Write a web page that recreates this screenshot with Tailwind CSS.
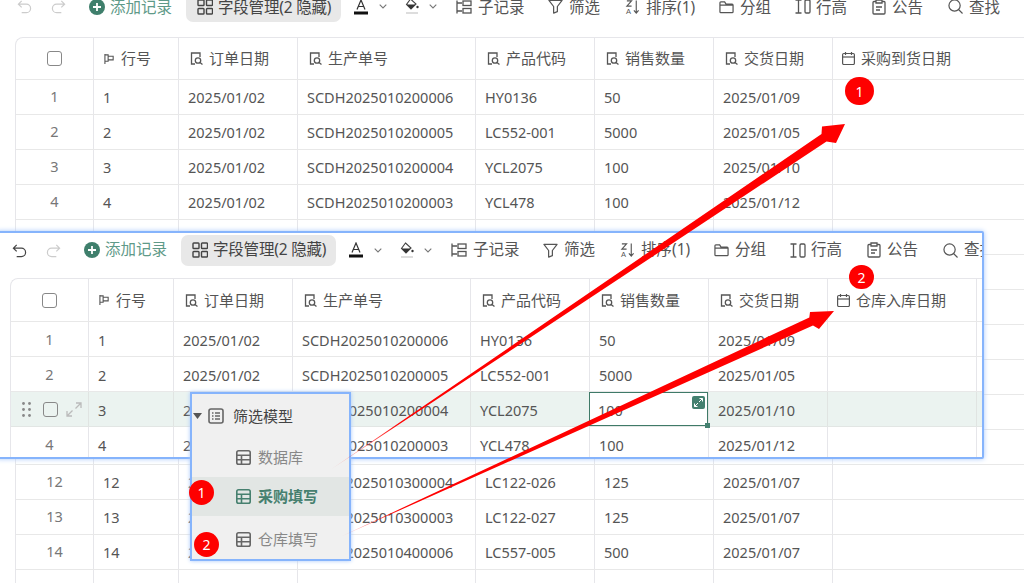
<!DOCTYPE html>
<html lang="zh">
<head>
<meta charset="utf-8">
<script src="https://cdn.jsdelivr.net/npm/@tailwindcss/browser@4"></script>
</head>
<body class="m-0 bg-white">
<svg class="hidden" width="0" height="0">
  <symbol id="undo" viewBox="0 0 16 16"><path d="M5 2 1.500 5.500 5 9M1.500 5.500H10a4.500 4.500 0 0 1 0 9H5" fill="none" stroke="currentColor" stroke-width="1.300"/></symbol>
  <symbol id="redo" viewBox="0 0 16 16"><path d="M11 2l3.500 3.500L11 9M14.500 5.500H6a4.500 4.500 0 0 0 0 9h5" fill="none" stroke="currentColor" stroke-width="1.300"/></symbol>
  <symbol id="plus" viewBox="0 0 16 16"><circle cx="8" cy="8" r="8" fill="#3f7f6c"/><path d="M8 4v8M4 8h8" stroke="#fff" stroke-width="1.800"/></symbol>
  <symbol id="grid4" viewBox="0 0 16 16"><g fill="none" stroke="currentColor" stroke-width="1.400"><rect x="1" y="1" width="6" height="5.500" rx=".8"/><rect x="9.500" y="1" width="6" height="5.500" rx=".8"/><rect x="1" y="9.500" width="6" height="5.500" rx=".8"/><rect x="9.500" y="9.500" width="6" height="5.500" rx=".8"/></g></symbol>
  <symbol id="fontc" viewBox="0 0 14 16"><path d="M3 10.500 7 1l4 9.500M4.500 7.500h5" fill="none" stroke="#333" stroke-width="1.200"/><rect x="0" y="12.500" width="14" height="3" fill="#111"/></symbol>
  <symbol id="chev" viewBox="0 0 8 5"><path d="M.7.7 4 4 7.300.7" fill="none" stroke="#777" stroke-width="1.100"/></symbol>
  <symbol id="bucket" viewBox="0 0 14 17"><path d="M5.500 1 11 6 6 11 1.500 6.500Z" fill="#fff" stroke="#444" stroke-width="1.100"/><path d="M1.500 6.500h9L6 11Z" fill="#333"/><circle cx="12.500" cy="9" r="1.200" fill="#333"/><rect x="1" y="14" width="12" height="2" fill="#ddd"/></symbol>
  <symbol id="sub" viewBox="0 0 16 14"><g fill="none" stroke="currentColor" stroke-width="1.300"><path d="M1 .5v13M1 3h5M1 11h5"/><rect x="7" y="1" width="8" height="4.500"/><rect x="7" y="8.500" width="8" height="4.500"/></g></symbol>
  <symbol id="filter" viewBox="0 0 16 16"><path d="M1 1.500h14L10 8v5.500l-4 1.500V8Z" fill="none" stroke="currentColor" stroke-width="1.300" stroke-linejoin="round"/></symbol>
  <symbol id="sort" viewBox="0 0 16 16"><path d="M12 1v13M9.500 11.500 12 14.500l2.500-3M2 1.500h5L2 7h5" fill="none" stroke="currentColor" stroke-width="1.200"/><text x="1" y="15.500" font-size="8" font-family="Liberation Sans" fill="currentColor">A</text></symbol>
  <symbol id="folder" viewBox="0 0 16 14"><path d="M1 12V2.500q0-1 1-1h4l1.500 2.500H14q1 0 1 1V12q0 1-1 1H2q-1 0-1-1ZM1 5h14" fill="none" stroke="currentColor" stroke-width="1.300"/></symbol>
  <symbol id="height" viewBox="0 0 16 15"><path d="M.5 1h6M.5 14h6M3.500 1v13" fill="none" stroke="currentColor" stroke-width="1.300"/><rect x="10" y="1" width="5" height="13" rx="1.200" fill="none" stroke="currentColor" stroke-width="1.300"/></symbol>
  <symbol id="notice" viewBox="0 0 14 16"><path d="M4 2.500H2q-1 0-1 1V14q0 1 1 1h10q1 0 1-1V3.500q0-1-1-1h-2M4 1h6v3H4ZM4 8h6M4 11h4" fill="none" stroke="currentColor" stroke-width="1.300"/></symbol>
  <symbol id="search" viewBox="0 0 16 16"><circle cx="7" cy="7" r="6" fill="none" stroke="currentColor" stroke-width="1.300"/><path d="m11.500 11.500 4 4" stroke="currentColor" stroke-width="1.300"/></symbol>
  <symbol id="flag" viewBox="0 0 12 12"><path d="M1 .5v11M1 1.500h3.500v7H1M4.500 3H10v4H4.500" fill="none" stroke="currentColor" stroke-width="1.200"/></symbol>
  <symbol id="doc" viewBox="0 0 13 13"><path d="M5 12H1.500V1H10v4" fill="none" stroke="currentColor" stroke-width="1.300"/><circle cx="8" cy="8.500" r="2.700" fill="none" stroke="currentColor" stroke-width="1.300"/><path d="m10 10.500 2.500 2" stroke="currentColor" stroke-width="1.300"/></symbol>
  <symbol id="cal" viewBox="0 0 13 13"><path d="M3.500 0v3M9.500 0v3" stroke="currentColor" stroke-width="1.200"/><rect x=".6" y="1.500" width="11.800" height="11" rx="1.200" fill="none" stroke="currentColor" stroke-width="1.200"/><path d="M.6 5h11.800" stroke="currentColor" stroke-width="1.200"/></symbol>
  <symbol id="tbl" viewBox="0 0 15 15"><rect x=".8" y=".8" width="13.400" height="13.400" rx="1.800" fill="none" stroke="currentColor" stroke-width="1.600"/><path d="M.8 5.300h13.400M.8 9.700h13.400M5.500 5.300v8.900" stroke="currentColor" stroke-width="1.600"/></symbol>
  <symbol id="list" viewBox="0 0 16 16"><rect x="1" y="1" width="14" height="14" rx="2" fill="none" stroke="currentColor" stroke-width="1.600"/><path d="M4 5h1.500M4 8h1.500M4 11h1.500M7 5h5M7 8h5M7 11h5" stroke="currentColor" stroke-width="1.300"/></symbol>
</svg>

<div class="relative w-[1024px] h-[583px] overflow-hidden bg-white font-['Noto_Sans','Noto_Sans_CJK_SC',sans-serif] text-[14.5px] text-[#555]">

  <!-- background window -->
  <div class="pl-[5px] -mt-[9px]">
    <div class="flex items-center h-[31px] text-[15.5px] whitespace-nowrap text-[#555] [&>*]:shrink-0 [&>span]:pt-[2px]">
      <svg class="ml-[12px] w-[15px] h-[15px] text-[#ccc]"><use href="#undo"/></svg>
      <svg class="ml-[19px] w-[15px] h-[15px] text-[#ccc]"><use href="#redo"/></svg>
      <svg class="ml-[23px] w-4 h-4"><use href="#plus"/></svg>
      <span class="ml-[5px] w-[62px] text-[#5f9a89]">添加记录</span>
      <div class="ml-[14px] w-[155px] h-[31px] rounded-[7px] bg-[#e8e8e8] flex items-center pl-[11px] gap-[5px] text-[#444]"><svg class="w-4 h-4 shrink-0"><use href="#grid4"/></svg><span class="tracking-[-0.2px] pt-[2px]">字段管理(2 隐藏)</span></div>
      <svg class="ml-[13px] w-[14px] h-4"><use href="#fontc"/></svg>
      <svg class="ml-[11px] w-2 h-[5px]"><use href="#chev"/></svg>
      <svg class="ml-[18px] w-[14px] h-[17px]"><use href="#bucket"/></svg>
      <svg class="ml-[10px] w-2 h-[5px]"><use href="#chev"/></svg>
      <svg class="ml-[19px] w-4 h-[14px]"><use href="#sub"/></svg>
      <span class="ml-[6px] w-[46px]">子记录</span>
      <svg class="ml-[24px] w-[15px] h-[15px]"><use href="#filter"/></svg>
      <span class="ml-[6px] w-[31px]">筛选</span>
      <svg class="ml-[25px] w-[15px] h-4"><use href="#sort"/></svg>
      <span class="ml-[6px] w-[48px]">排序(1)</span>
      <svg class="ml-[25px] w-[15px] h-[14px]"><use href="#folder"/></svg>
      <span class="ml-[6px] w-[30px]">分组</span>
      <svg class="ml-[25px] w-4 h-[15px]"><use href="#height"/></svg>
      <span class="ml-[5px] w-[30px]">行高</span>
      <svg class="ml-[26px] w-[14px] h-4"><use href="#notice"/></svg>
      <span class="ml-[6px] w-[30px]">公告</span>
      <svg class="ml-[26px] w-[15px] h-[15px]"><use href="#search"/></svg>
      <span class="ml-[6px]">查找</span>
    </div>
  </div>

  <div class="ml-[15px] mt-[15px] w-[1100px] rounded-tl-[8px] border-t border-l border-[#e6e6ea]">
    <div class="grid grid-cols-[77px_85px_119px_178px_119px_119px_119px_1fr] h-[42px] border-b border-[#e8e8e8]">
      <div class="flex items-center justify-center"><span class="block w-[15px] h-[15px] border border-[#888] rounded-[3px]"></span></div>
      <div class="flex items-center gap-[6px] pl-[10px] border-l border-[#e6e6ea] text-[15px]"><svg class="w-[11px] h-[12px]"><use href="#flag"/></svg>行号</div>
      <div class="flex items-center gap-[6px] pl-[11px] border-l border-[#e6e6ea] text-[15px]"><svg class="w-[13px] h-[13px]"><use href="#doc"/></svg>订单日期</div>
      <div class="flex items-center gap-[6px] pl-[11px] border-l border-[#e6e6ea] text-[15px]"><svg class="w-[13px] h-[13px]"><use href="#doc"/></svg>生产单号</div>
      <div class="flex items-center gap-[6px] pl-[11px] border-l border-[#e6e6ea] text-[15px]"><svg class="w-[13px] h-[13px]"><use href="#doc"/></svg>产品代码</div>
      <div class="flex items-center gap-[6px] pl-[11px] border-l border-[#e6e6ea] text-[15px]"><svg class="w-[13px] h-[13px]"><use href="#doc"/></svg>销售数量</div>
      <div class="flex items-center gap-[6px] pl-[11px] border-l border-[#e6e6ea] text-[15px]"><svg class="w-[13px] h-[13px]"><use href="#doc"/></svg>交货日期</div>
      <div class="flex items-center gap-[6px] pl-[9px] border-l border-[#e6e6ea] text-[15px]"><svg class="w-[13px] h-[13px]"><use href="#cal"/></svg>采购到货日期</div>
    </div>
    <div class="grid grid-cols-[77px_85px_119px_178px_119px_119px_119px_1fr] h-[35px] items-stretch border-b border-[#e8e8e8] [&>div]:flex [&>div]:items-center [&>div]:pl-[9px] [&>div]:pt-[2px] [&>div]:border-l [&>div]:border-[#e6e6ea]">
      <div class="!border-l-0 !pl-0 justify-center text-[#777] -translate-y-px">1</div><div>1</div><div>2025/01/02</div><div>SCDH2025010200006</div><div>HY0136</div><div>50</div><div>2025/01/09</div><div></div>
    </div>
    <div class="grid grid-cols-[77px_85px_119px_178px_119px_119px_119px_1fr] h-[35px] items-stretch border-b border-[#e8e8e8] [&>div]:flex [&>div]:items-center [&>div]:pl-[9px] [&>div]:pt-[2px] [&>div]:border-l [&>div]:border-[#e6e6ea]">
      <div class="!border-l-0 !pl-0 justify-center text-[#777] -translate-y-px">2</div><div>2</div><div>2025/01/02</div><div>SCDH2025010200005</div><div>LC552-001</div><div>5000</div><div>2025/01/05</div><div></div>
    </div>
    <div class="grid grid-cols-[77px_85px_119px_178px_119px_119px_119px_1fr] h-[35px] items-stretch border-b border-[#e8e8e8] [&>div]:flex [&>div]:items-center [&>div]:pl-[9px] [&>div]:pt-[2px] [&>div]:border-l [&>div]:border-[#e6e6ea]">
      <div class="!border-l-0 !pl-0 justify-center text-[#777] -translate-y-px">3</div><div>3</div><div>2025/01/02</div><div>SCDH2025010200004</div><div>YCL2075</div><div>100</div><div>2025/01/10</div><div></div>
    </div>
    <div class="grid grid-cols-[77px_85px_119px_178px_119px_119px_119px_1fr] h-[35px] items-stretch border-b border-[#e8e8e8] [&>div]:flex [&>div]:items-center [&>div]:pl-[9px] [&>div]:pt-[2px] [&>div]:border-l [&>div]:border-[#e6e6ea]">
      <div class="!border-l-0 !pl-0 justify-center text-[#777] -translate-y-px">4</div><div>4</div><div>2025/01/02</div><div>SCDH2025010200003</div><div>YCL478</div><div>100</div><div>2025/01/12</div><div></div>
    </div>
    <!-- rows 5 to 11, behind the front window -->
    <div class="grid grid-cols-[77px_85px_119px_178px_119px_119px_119px_1fr] h-[245px] [&>div]:border-l [&>div]:border-[#e6e6ea] bg-[repeating-linear-gradient(to_bottom,transparent_0,transparent_34px,#e8e8e8_34px,#e8e8e8_35px)]">
      <div class="!border-l-0"></div><div></div><div></div><div></div><div></div><div></div><div></div><div></div>
    </div>
    <div class="grid grid-cols-[77px_85px_119px_178px_119px_119px_119px_1fr] h-[35px] items-stretch border-b border-[#e8e8e8] [&>div]:flex [&>div]:items-center [&>div]:pl-[9px] [&>div]:pt-[2px] [&>div]:border-l [&>div]:border-[#e6e6ea]">
      <div class="!border-l-0 !pl-0 justify-center text-[#777] -translate-y-px">12</div><div>12</div><div>2025/01/03</div><div>SCDH2025010300004</div><div>LC122-026</div><div>125</div><div>2025/01/07</div><div></div>
    </div>
    <div class="grid grid-cols-[77px_85px_119px_178px_119px_119px_119px_1fr] h-[35px] items-stretch border-b border-[#e8e8e8] [&>div]:flex [&>div]:items-center [&>div]:pl-[9px] [&>div]:pt-[2px] [&>div]:border-l [&>div]:border-[#e6e6ea]">
      <div class="!border-l-0 !pl-0 justify-center text-[#777] -translate-y-px">13</div><div>13</div><div>2025/01/03</div><div>SCDH2025010300003</div><div>LC122-027</div><div>125</div><div>2025/01/07</div><div></div>
    </div>
    <div class="grid grid-cols-[77px_85px_119px_178px_119px_119px_119px_1fr] h-[35px] items-stretch border-b border-[#e8e8e8] [&>div]:flex [&>div]:items-center [&>div]:pl-[9px] [&>div]:pt-[2px] [&>div]:border-l [&>div]:border-[#e6e6ea]">
      <div class="!border-l-0 !pl-0 justify-center text-[#777] -translate-y-px">14</div><div>14</div><div>2025/01/04</div><div>SCDH2025010400006</div><div>LC557-005</div><div>500</div><div>2025/01/07</div><div></div>
    </div>
    <div class="grid grid-cols-[77px_85px_119px_178px_119px_119px_119px_1fr] h-[35px] items-stretch [&>div]:flex [&>div]:items-center [&>div]:pl-[9px] [&>div]:pt-[2px] [&>div]:border-l [&>div]:border-[#e6e6ea]">
      <div class="!border-l-0 !pl-0 justify-center text-[#777] -translate-y-px">15</div><div>15</div><div>2025/01/04</div><div>SCDH2025010400005</div><div>HY0136</div><div>90</div><div>2025/01/07</div><div></div>
    </div>
  </div>

  <!-- front window -->
  <div class="absolute left-[-4px] top-[231px] w-[988px] h-[228px] bg-white border-2 border-[#86b4fc] rounded-[2px] shadow-[0_0_5px_#a9c9fb] overflow-hidden">
    <div class="pl-[2px] pt-[1px] flex items-center h-[33px] text-[15.5px] whitespace-nowrap text-[#555] [&>*]:shrink-0">
      <svg class="ml-[12px] w-[15px] h-[15px] text-[#444]"><use href="#undo"/></svg>
      <svg class="ml-[19px] w-[15px] h-[15px] text-[#ccc]"><use href="#redo"/></svg>
      <svg class="ml-[23px] w-4 h-4"><use href="#plus"/></svg>
      <span class="ml-[5px] w-[62px] text-[#5f9a89]">添加记录</span>
      <div class="ml-[14px] w-[155px] h-[31px] rounded-[7px] bg-[#e8e8e8] flex items-center pl-[11px] gap-[5px] text-[#444]"><svg class="w-4 h-4 shrink-0"><use href="#grid4"/></svg><span class="tracking-[-0.2px]">字段管理(2 隐藏)</span></div>
      <svg class="ml-[13px] w-[14px] h-4"><use href="#fontc"/></svg>
      <svg class="ml-[11px] w-2 h-[5px]"><use href="#chev"/></svg>
      <svg class="ml-[18px] w-[14px] h-[17px]"><use href="#bucket"/></svg>
      <svg class="ml-[10px] w-2 h-[5px]"><use href="#chev"/></svg>
      <svg class="ml-[19px] w-4 h-[14px]"><use href="#sub"/></svg>
      <span class="ml-[6px] w-[46px]">子记录</span>
      <svg class="ml-[24px] w-[15px] h-[15px]"><use href="#filter"/></svg>
      <span class="ml-[6px] w-[31px]">筛选</span>
      <svg class="ml-[25px] w-[15px] h-4"><use href="#sort"/></svg>
      <span class="ml-[6px] w-[48px]">排序(1)</span>
      <svg class="ml-[25px] w-[15px] h-[14px]"><use href="#folder"/></svg>
      <span class="ml-[6px] w-[30px]">分组</span>
      <svg class="ml-[25px] w-4 h-[15px]"><use href="#height"/></svg>
      <span class="ml-[5px] w-[30px]">行高</span>
      <svg class="ml-[26px] w-[14px] h-4"><use href="#notice"/></svg>
      <span class="ml-[6px] w-[30px]">公告</span>
      <svg class="ml-[26px] w-[15px] h-[15px]"><use href="#search"/></svg>
      <span class="ml-[6px]">查找</span>
    </div>
    <div class="ml-[12px] mt-[12px] w-[1100px] rounded-tl-[8px] border-t border-l border-[#e6e6ea]">
      <div class="grid grid-cols-[77px_85px_119px_178px_119px_119px_119px_149px_1fr] h-[43px] border-b border-[#e8e8e8]">
        <div class="flex items-center justify-center"><span class="block w-[15px] h-[15px] border border-[#888] rounded-[3px]"></span></div>
        <div class="flex items-center gap-[6px] pl-[10px] border-l border-[#e6e6ea] text-[15px]"><svg class="w-[11px] h-[12px]"><use href="#flag"/></svg>行号</div>
        <div class="flex items-center gap-[6px] pl-[11px] border-l border-[#e6e6ea] text-[15px]"><svg class="w-[13px] h-[13px]"><use href="#doc"/></svg>订单日期</div>
        <div class="flex items-center gap-[6px] pl-[11px] border-l border-[#e6e6ea] text-[15px]"><svg class="w-[13px] h-[13px]"><use href="#doc"/></svg>生产单号</div>
        <div class="flex items-center gap-[6px] pl-[11px] border-l border-[#e6e6ea] text-[15px]"><svg class="w-[13px] h-[13px]"><use href="#doc"/></svg>产品代码</div>
        <div class="flex items-center gap-[6px] pl-[11px] border-l border-[#e6e6ea] text-[15px]"><svg class="w-[13px] h-[13px]"><use href="#doc"/></svg>销售数量</div>
        <div class="flex items-center gap-[6px] pl-[11px] border-l border-[#e6e6ea] text-[15px]"><svg class="w-[13px] h-[13px]"><use href="#doc"/></svg>交货日期</div>
        <div class="flex items-center gap-[6px] pl-[9px] border-l border-[#e6e6ea] text-[15px]"><svg class="w-[13px] h-[13px]"><use href="#cal"/></svg>仓库入库日期</div>
        <div class="border-l border-[#e6e6ea]"></div>
      </div>
      <div class="grid grid-cols-[77px_85px_119px_178px_119px_119px_119px_149px_1fr] h-[35px] items-stretch border-b border-[#e8e8e8] [&>div]:flex [&>div]:items-center [&>div]:pl-[9px] [&>div]:pt-[3px] [&>div]:border-l [&>div]:border-[#e6e6ea]">
        <div class="!border-l-0 !pl-0 justify-center text-[#777] -translate-y-px">1</div><div>1</div><div>2025/01/02</div><div>SCDH2025010200006</div><div>HY0136</div><div>50</div><div>2025/01/09</div><div></div><div></div>
      </div>
      <div class="grid grid-cols-[77px_85px_119px_178px_119px_119px_119px_149px_1fr] h-[35px] items-stretch border-b border-[#e8e8e8] [&>div]:flex [&>div]:items-center [&>div]:pl-[9px] [&>div]:pt-[3px] [&>div]:border-l [&>div]:border-[#e6e6ea]">
        <div class="!border-l-0 !pl-0 justify-center text-[#777] -translate-y-px">2</div><div>2</div><div>2025/01/02</div><div>SCDH2025010200005</div><div>LC552-001</div><div>5000</div><div>2025/01/05</div><div></div><div></div>
      </div>
      <div class="grid grid-cols-[77px_85px_119px_178px_119px_119px_119px_149px_1fr] h-[35px] items-stretch bg-[#ebf3f0] border-b border-[#e2e6e4] [&>div]:flex [&>div]:items-center [&>div]:pl-[9px] [&>div]:pt-[3px] [&>div]:border-l [&>div]:border-[#e0e4e2]">
        <div class="!border-l-0 !pl-0 !pt-0">
          <svg class="ml-[11px] w-[9px] h-[15px] text-[#888]" viewBox="0 0 9 15" fill="currentColor"><circle cx="1.500" cy="1.500" r="1.400"/><circle cx="7.500" cy="1.500" r="1.400"/><circle cx="1.500" cy="7.500" r="1.400"/><circle cx="7.500" cy="7.500" r="1.400"/><circle cx="1.500" cy="13.500" r="1.400"/><circle cx="7.500" cy="13.500" r="1.400"/></svg>
          <span class="ml-[12px] block w-[15px] h-[15px] border border-[#888] rounded-[3px]"></span>
          <svg class="ml-[8px] w-[16px] h-[15px] text-[#bbb]" viewBox="0 0 16 15" fill="none" stroke="currentColor" stroke-width="1.300"><path d="M10 1h5v5M15 1 9.500 6.500M6 14H1V9M1 14l5.500-5.500"/></svg>
        </div>
        <div>3</div><div>2025/01/02</div><div>SCDH2025010200004</div><div>YCL2075</div>
        <div class="relative bg-white !border-0 outline outline-[1.500px] -outline-offset-1 outline-[#3f7a68]">100
          <span class="absolute right-[3px] top-[4px] w-[13px] h-[13px] rounded-[2px] bg-[#44806f] flex items-center justify-center"><svg class="w-[9px] h-[9px]" viewBox="0 0 9 9" fill="none" stroke="#fff" stroke-width="1"><path d="M5.500.5h3v3M8.500.5 5 4M3.500 8.500h-3v-3M.5 8.500 4 5"/></svg></span>
          <span class="absolute -right-[2px] -bottom-[2px] w-[5px] h-[5px] bg-[#44806f]"></span>
        </div>
        <div>2025/01/10</div><div></div><div></div>
      </div>
      <div class="grid grid-cols-[77px_85px_119px_178px_119px_119px_119px_149px_1fr] h-[35px] items-stretch [&>div]:flex [&>div]:items-center [&>div]:pl-[9px] [&>div]:pt-[3px] [&>div]:border-l [&>div]:border-[#e6e6ea]">
        <div class="!border-l-0 !pl-0 justify-center text-[#777] -translate-y-px">4</div><div>4</div><div>2025/01/02</div><div>SCDH2025010200003</div><div>YCL478</div><div>100</div><div>2025/01/12</div><div></div><div></div>
      </div>
    </div>
  </div>

  <!-- tree menu -->
  <div class="absolute left-[190px] top-[392px] w-[161px] h-[169px] bg-[#f0f0f0] border-2 border-[#86b4fc] shadow-[0_0_4px_#a9c9fb] text-[15px]">
    <div class="h-[44px] flex items-center text-[#444]">
      <svg class="ml-[1px] w-[9px] h-[6px] text-[#555]" viewBox="0 0 9 6" fill="currentColor"><path d="M0 0h9L4.500 6Z"/></svg>
      <svg class="ml-[6px] w-4 h-4 text-[#666]"><use href="#list"/></svg>
      <span class="ml-[9px]">筛选模型</span>
    </div>
    <div class="h-[39px] flex items-center pl-[44px] text-[#888]"><svg class="w-[15px] h-[15px] text-[#666]"><use href="#tbl"/></svg><span class="ml-[7px]">数据库</span></div>
    <div class="h-[39px] flex items-center pl-[44px] bg-[#e2e6e4] text-[#46806f] font-bold"><svg class="w-[15px] h-[15px] text-[#46806f]"><use href="#tbl"/></svg><span class="ml-[7px]">采购填写</span></div>
    <div class="h-[43px] flex items-center pl-[44px] pt-[3px] text-[#888]"><svg class="w-[15px] h-[15px] text-[#666]"><use href="#tbl"/></svg><span class="ml-[7px]">仓库填写</span></div>
  </div>

  <!-- annotation arrows -->
  <svg class="absolute left-0 top-0 w-[1024px] h-[583px] pointer-events-none" viewBox="0 0 1024 583">
    <defs>
      <linearGradient id="fade1" gradientUnits="userSpaceOnUse" x1="330" y1="470" x2="400" y2="423"><stop offset="0" stop-color="#ff0000" stop-opacity=".1"/><stop offset="1" stop-color="#ff0000"/></linearGradient>
      <linearGradient id="fade2" gradientUnits="userSpaceOnUse" x1="340" y1="537" x2="400" y2="509"><stop offset="0" stop-color="#ff0000" stop-opacity=".1"/><stop offset="1" stop-color="#ff0000"/></linearGradient>
    </defs>
    <polygon fill="url(#fade1)" points="330,470 821.500,134 822,126.500 845,124 836,143 826.500,141.500"/>
    <polygon fill="url(#fade2)" points="340,537 809.300,317.500 810,312 834,311 819,329 813,325.500"/>
  </svg>

  <!-- number badges -->
  <span class="absolute left-[845px] top-[77px] w-[29px] h-[28px] rounded-full bg-[#fe0000] text-white text-[14px] flex items-center justify-center">1</span>
  <span class="absolute left-[849px] top-[265px] w-[25px] h-[24px] rounded-full bg-[#fe0000] text-white text-[14px] flex items-center justify-center">2</span>
  <span class="absolute left-[189px] top-[480px] w-[25px] h-[25px] rounded-full bg-[#fe0000] text-white text-[14px] flex items-center justify-center">1</span>
  <span class="absolute left-[194px] top-[532px] w-[25px] h-[25px] rounded-full bg-[#fe0000] text-white text-[14px] flex items-center justify-center">2</span>
</div>
</body>
</html>
